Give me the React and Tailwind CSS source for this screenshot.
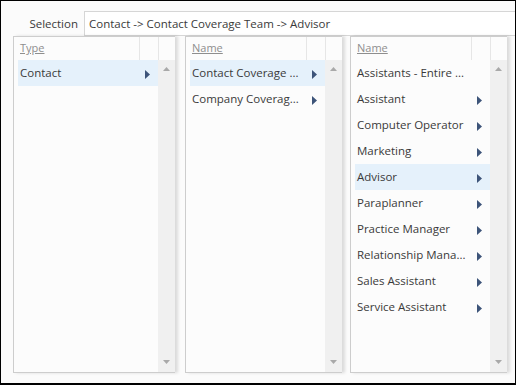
import React from "react";

const Arrow = () => (
  <svg width="5" height="9" viewBox="0 0 5 9">
    <polygon points="0,0 5,4.5 0,9" fill="#3d5479" />
  </svg>
);

const Up = () => (
  <svg width="7" height="4" viewBox="0 0 7 4">
    <polygon points="0,4 3.5,0 7,4" fill="#a9a9a9" />
  </svg>
);
const Down = () => (
  <svg width="7" height="4" viewBox="0 0 7 4">
    <polygon points="0,0 7,0 3.5,4" fill="#a9a9a9" />
  </svg>
);

function Panel({ width, header, rows }) {
  return (
    <div
      className={`${width} h-full flex flex-col border-l border-t border-b border-[#cdcdcd] bg-[#fcfcfc] shadow-[3px_0_3px_rgba(0,0,0,0.13)]`}
    >
      <div className="h-[23px] flex shrink-0">
        <div className="flex-1 flex items-center pl-[6px] text-[11px] text-[#8e8e8e] underline">
          {header}
        </div>
        <div className="w-[19px] border-l border-[#e6e6e6]" />
        <div className="w-[17px] border-l border-[#e6e6e6]" />
      </div>
      <div className="flex-1 flex min-h-0">
        <div className="flex-1 pl-[4px] min-w-0">
          {rows.map((r) => (
            <div
              key={r.label}
              className={`h-[26px] flex items-center ${r.sel ? "bg-[#e5f1fb]" : ""}`}
            >
              <div className="flex-1 pl-[2px] whitespace-nowrap overflow-hidden text-[#3a3a3a]">
                {r.label}
              </div>
              <div className="w-[19px] flex justify-center pr-[3px] pt-[2px]">
                {r.arrow ? <Arrow /> : null}
              </div>
            </div>
          ))}
        </div>
        <div className="w-[17px] bg-[#f0f0f0] flex flex-col items-center justify-between pt-[7px] pb-[8px]">
          <Up />
          <Down />
        </div>
      </div>
    </div>
  );
}

export default function App() {
  return (
    <div
      className="w-[516px] h-[385px] border border-black border-b-2 bg-[#fbfbfb] flex flex-col text-[11.5px] text-[#333]"
      style={{ fontFamily: '"Open Sans", "Noto Sans", sans-serif' }}
    >
      <div className="flex mt-[10px] h-[25px] shrink-0">
        <div className="w-[83px] flex items-center justify-end pr-[6px] text-[#3a3a3a]">
          Selection
        </div>
        <div className="flex-1 bg-white border border-r-0 border-[#d6d6d6] flex items-center pl-[4px] text-[#3a3a3a]">
          Contact -&gt; Contact Coverage Team -&gt; Advisor
        </div>
      </div>
      <div className="flex pl-[12px] h-[337px] shrink-0">
        <Panel
          width="w-[162px]"
          header="Type"
          rows={[{ label: "Contact", arrow: true, sel: true }]}
        />
        <div className="w-[10px]" />
        <Panel
          width="w-[157px]"
          header="Name"
          rows={[
            { label: "Contact Coverage ...", arrow: true, sel: true },
            { label: "Company Coverag...", arrow: true },
          ]}
        />
        <div className="w-[8px]" />
        <Panel
          width="w-[157px]"
          header="Name"
          rows={[
            { label: "Assistants - Entire ...", arrow: false },
            { label: "Assistant", arrow: true },
            { label: "Computer Operator", arrow: true },
            { label: "Marketing", arrow: true },
            { label: "Advisor", arrow: true, sel: true },
            { label: "Paraplanner", arrow: true },
            { label: "Practice Manager", arrow: true },
            { label: "Relationship Mana...", arrow: true },
            { label: "Sales Assistant", arrow: true },
            { label: "Service Assistant", arrow: true },
          ]}
        />
      </div>
    </div>
  );
}
